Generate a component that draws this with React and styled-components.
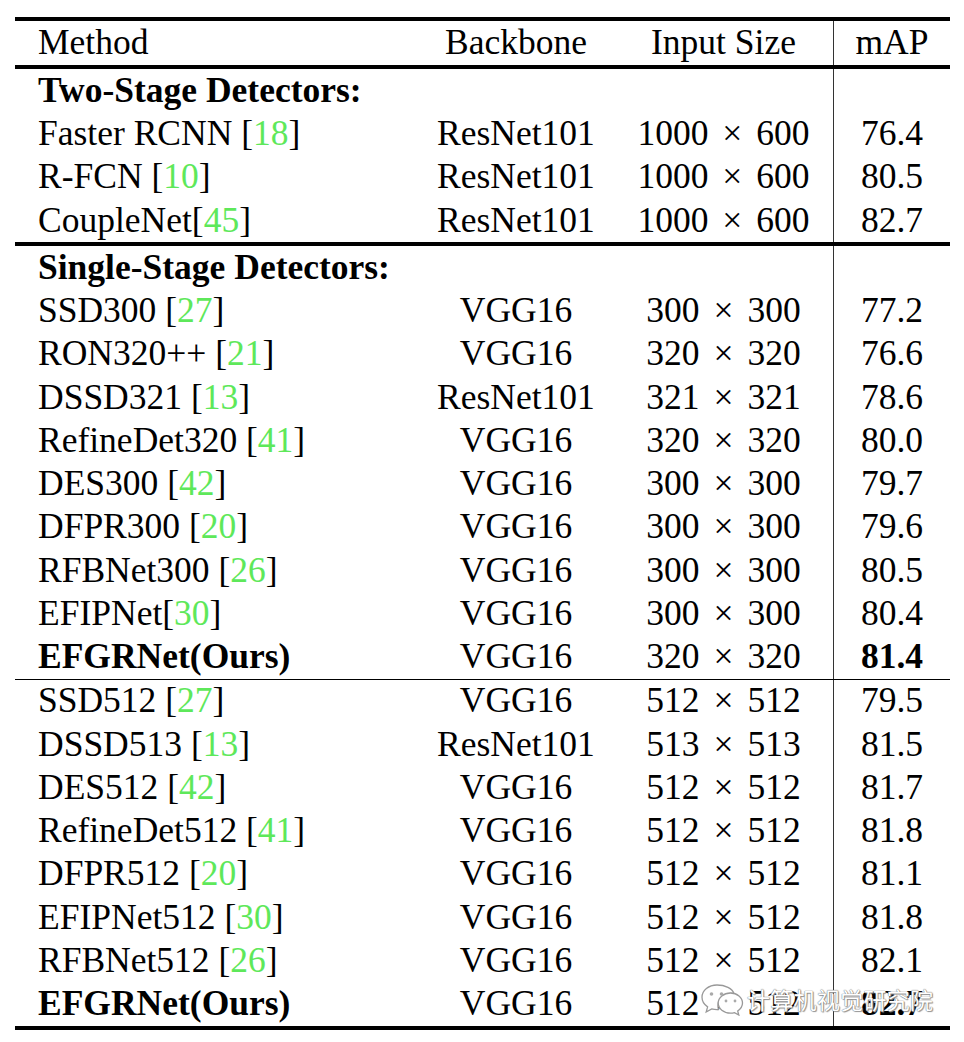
import React from "react";
import styled, { createGlobalStyle } from "styled-components";

const Global = createGlobalStyle`
  html, body { margin: 0; padding: 0; background: #fff; }
  body { font-family: "Liberation Serif", "Times New Roman", serif; color: #000; }
`;

const Page = styled.div`
  position: relative;
  width: 964px;
  height: 1042px;
  padding: 17px 14px 0 15px;
  box-sizing: border-box;
`;

const Table = styled.div`
  border-top: 4px solid #000;
  border-bottom: 4px solid #000;
  display: flex;
  flex-direction: column;
`;

const Section = styled.div`
  border-top: ${(p) => (p.$rule === "thick" ? "4px solid #000" : p.$rule === "thin" ? "1px solid #000" : "none")};
  display: flex;
  flex-direction: column;
`;

const Row = styled.div`
  display: grid;
  grid-template-columns: 403px 196px 219px 1fr;
  height: ${(p) => (p.$head ? "44px" : "43.25px")};
  font-size: 35.5px;
  line-height: 1;
  align-items: stretch;
`;

const Cell = styled.div`
  display: flex;
  align-items: center;
  justify-content: ${(p) => (p.$left ? "flex-start" : "center")};
  padding-left: ${(p) => (p.$left ? "23px" : "0")};
  font-weight: ${(p) => (p.$bold ? 700 : 400)};
  white-space: nowrap;
  ${(p) => (p.$rule ? "border-left: 1px solid #333;" : "")}
`;

const Ref = styled.span`
  color: #5ee85a;
`;

const Times = styled.span`
  margin: 0 5px;
`;

const Watermark = styled.div`
  position: absolute;
  left: 700px;
  top: 982px;
  display: flex;
  align-items: center;
  gap: 3px;
  pointer-events: none;
`;

const WmText = styled.span`
  font-family: "Noto Sans CJK SC", sans-serif;
  font-size: 23px;
  color: #fff;
  letter-spacing: 0.3px;
  text-shadow: 0 0 1px #777, 0 0 1px #777, 1px 1px 1px #999;
`;

const Ht = ({ name, refn, sep = " " }) => (
  <span>
    {name}
    {refn && (
      <>
        {sep}[<Ref>{refn}</Ref>]
      </>
    )}
  </span>
);

const Size = ({ v }) => {
  const [a, b] = v.split("x");
  return (
    <span>
      {a}
      {" "}
      <Times>×</Times>
      {" "}
      {b}
    </span>
  );
};

const two = [
  ["Faster RCNN", "18", " ", "ResNet101", "1000x600", "76.4"],
  ["R-FCN", "10", " ", "ResNet101", "1000x600", "80.5"],
  ["CoupleNet", "45", "", "ResNet101", "1000x600", "82.7"],
];

const single = [
  ["SSD300", "27", " ", "VGG16", "300x300", "77.2"],
  ["RON320++", "21", " ", "VGG16", "320x320", "76.6"],
  ["DSSD321", "13", " ", "ResNet101", "321x321", "78.6"],
  ["RefineDet320", "41", " ", "VGG16", "320x320", "80.0"],
  ["DES300", "42", " ", "VGG16", "300x300", "79.7"],
  ["DFPR300", "20", " ", "VGG16", "300x300", "79.6"],
  ["RFBNet300", "26", " ", "VGG16", "300x300", "80.5"],
  ["EFIPNet", "30", "", "VGG16", "300x300", "80.4"],
  ["EFGRNet(Ours)", null, "", "VGG16", "320x320", "81.4", true],
];

const large = [
  ["SSD512", "27", " ", "VGG16", "512x512", "79.5"],
  ["DSSD513", "13", " ", "ResNet101", "513x513", "81.5"],
  ["DES512", "42", " ", "VGG16", "512x512", "81.7"],
  ["RefineDet512", "41", " ", "VGG16", "512x512", "81.8"],
  ["DFPR512", "20", " ", "VGG16", "512x512", "81.1"],
  ["EFIPNet512", "30", " ", "VGG16", "512x512", "81.8"],
  ["RFBNet512", "26", " ", "VGG16", "512x512", "82.1"],
  ["EFGRNet(Ours)", null, "", "VGG16", "512x512", "82.7", true],
];

const DataRow = ({ r }) => (
  <Row>
    <Cell $left $bold={r[6]}>
      <Ht name={r[0]} refn={r[1]} sep={r[2]} />
    </Cell>
    <Cell>{r[3]}</Cell>
    <Cell>
      <Size v={r[4]} />
    </Cell>
    <Cell $rule $bold={r[6]}>{r[5]}</Cell>
  </Row>
);

const TitleRow = ({ children }) => (
  <Row>
    <Cell $left $bold>{children}</Cell>
    <Cell />
    <Cell />
    <Cell $rule />
  </Row>
);

const WeChat = () => (
  <svg width="44" height="34" viewBox="0 0 44 34" fill="none">
    <path
      d="M17 3C8.7 3 2 8.5 2 15.3c0 3.9 2.2 7.3 5.6 9.6L6.2 30l5.5-3.1c1.7.5 3.4.7 5.3.7.5 0 1 0 1.5-.1-.4-1.2-.6-2.4-.6-3.7 0-7 6.8-12.6 15.2-12.6h.8C32.3 6.6 25.3 3 17 3z"
      fill="#fff"
      stroke="#999"
      strokeWidth="1.3"
    />
    <path
      d="M33.5 14c-6.8 0-12.3 4.5-12.3 10.1s5.5 10.1 12.3 10.1c1.4 0 2.8-.2 4-.6l4.3 2.4-1.1-4c2.9-1.9 4.8-4.7 4.8-7.9 0-5.6-5.3-10.1-12-10.1z"
      fill="#fff"
      stroke="#999"
      strokeWidth="1.3"
      transform="translate(-3 -3)"
    />
    <circle cx="11.5" cy="12" r="1.8" fill="#aaa" />
    <circle cx="21.5" cy="12" r="1.8" fill="#aaa" />
    <circle cx="26" cy="19" r="1.4" fill="#aaa" />
    <circle cx="35" cy="19" r="1.4" fill="#aaa" />
  </svg>
);

export default function App() {
  return (
    <>
      <Global />
      <Page>
        <Table>
          <Row $head>
            <Cell $left>Method</Cell>
            <Cell>Backbone</Cell>
            <Cell>Input Size</Cell>
            <Cell $rule>mAP</Cell>
          </Row>
          <Section $rule="thick">
            <TitleRow>Two-Stage Detectors:</TitleRow>
            {two.map((r, i) => (
              <DataRow key={i} r={r} />
            ))}
          </Section>
          <Section $rule="thick">
            <TitleRow>Single-Stage Detectors:</TitleRow>
            {single.map((r, i) => (
              <DataRow key={i} r={r} />
            ))}
          </Section>
          <Section $rule="thin">
            {large.map((r, i) => (
              <DataRow key={i} r={r} />
            ))}
          </Section>
        </Table>
        <Watermark>
          <WeChat />
          <WmText>计算机视觉研究院</WmText>
        </Watermark>
      </Page>
    </>
  );
}
